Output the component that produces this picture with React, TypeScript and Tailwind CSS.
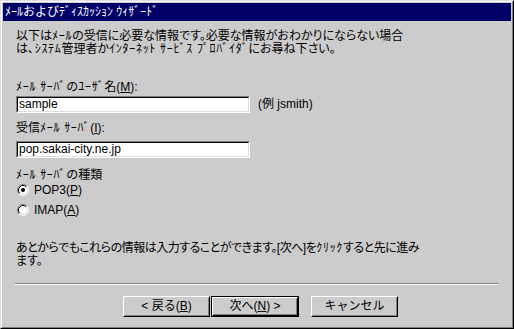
import React from 'react';

const FONT = { fontFamily: '"Liberation Sans", "Noto Sans CJK JP", sans-serif' };

// half-width katakana runs: the reference font sets them a little wider
function H({ children }: { children: React.ReactNode }) {
  return <span className="tracking-[0.7px]">{children}</span>;
}

function Radio({ checked }: { checked?: boolean }) {
  return (
    <svg width="12" height="12" viewBox="0 0 12 12" className="shrink-0">
      <circle cx="6" cy="6" r="5" fill="#ffffff" />
      <path d="M 2.11 9.89 A 5.5 5.5 0 0 1 9.89 2.11" fill="none" stroke="#808080" strokeWidth="1" />
      <path d="M 9.89 2.11 A 5.5 5.5 0 0 1 2.11 9.89" fill="none" stroke="#ffffff" strokeWidth="1" />
      <path d="M 2.82 9.18 A 4.5 4.5 0 0 1 9.18 2.82" fill="none" stroke="#000000" strokeWidth="1" />
      <path d="M 9.18 2.82 A 4.5 4.5 0 0 1 2.82 9.18" fill="none" stroke="#dfdfdf" strokeWidth="1" />
      {checked && <circle cx="6" cy="6" r="2" fill="#000000" />}
    </svg>
  );
}

function TextBox({ value }: { value: string }) {
  return (
    <div className="w-[234px] h-[17px] border border-t-[#808080] border-l-[#808080] border-b-white border-r-white">
      <div className="h-full bg-white border border-t-black border-l-black border-b-[#dfdfdf] border-r-[#dfdfdf] pl-[1px] text-[12px] leading-[13px] text-black">
        {value}
      </div>
    </div>
  );
}

function Button({ children, isDefault }: { children: React.ReactNode; isDefault?: boolean }) {
  const face = (
    <div className="h-full border border-t-white border-l-white border-b-black border-r-black">
      <div className="h-full flex items-center justify-center border border-t-[#cccccc] border-l-[#cccccc] border-b-[#808080] border-r-[#808080] text-[12px] leading-[13px] text-black">
        {children}
      </div>
    </div>
  );
  if (isDefault) {
    return <div className="w-[88px] h-[21px] border border-black">{face}</div>;
  }
  return <div className="w-[87px] h-[21px]">{face}</div>;
}

export default function App() {
  return (
    <div style={FONT} className="w-[514px] h-[329px] bg-[#cccccc] border border-t-[#dfdfdf] border-l-[#dfdfdf] border-b-black border-r-black">
      <div className="h-full p-[1px] border border-t-white border-l-white border-b-[#808080] border-r-[#808080] flex flex-col">
        <div className="h-[18px] bg-[#000066] text-white text-[12px] leading-[18px] px-[2px] shrink-0">
          ﾒｰﾙおよびﾃﾞｨｽｶｯｼｮﾝ ｳｨｻﾞｰﾄﾞ
        </div>

        <div className="pl-[13px] flex flex-col text-[12px] leading-[13px] text-black">
          <div className="mt-[9px] [font-feature-settings:'palt']">
            <div>以下は<H>ﾒｰﾙ</H>の受信に必要な情報です。必要な情報がおわかりにならない場合</div>
            <div>は<H>､ｼｽﾃﾑ</H>管理者か<H>ｲﾝﾀｰﾈｯﾄ ｻｰﾋﾞｽ ﾌﾟﾛﾊﾞｲﾀﾞ</H>にお尋ね下さい。</div>
          </div>

          <div className="mt-[25px]">
            <H>ﾒｰﾙ ｻｰﾊﾞ</H>の<H>ﾕｰｻﾞ</H>名(<u>M</u>):
          </div>
          <div className="mt-[2px] flex items-center">
            <TextBox value="sample" />
            <span className="ml-[8px]">(例 jsmith)</span>
          </div>

          <div className="mt-[9px]">
            受信<H>ﾒｰﾙ ｻｰﾊﾞ</H>(<u>I</u>):
          </div>
          <div className="mt-[6px]">
            <TextBox value="pop.sakai-city.ne.jp" />
          </div>

          <div className="mt-[11px]"><H>ﾒｰﾙ ｻｰﾊﾞ</H>の種類</div>
          <div className="h-[16px] flex items-center ml-[1px]">
            <Radio checked />
            <span className="ml-[5px]">POP3(<u>P</u>)</span>
          </div>
          <div className="mt-[4px] h-[16px] flex items-center ml-[1px]">
            <Radio />
            <span className="ml-[5px]">IMAP(<u>A</u>)</span>
          </div>

          <div className="mt-[24px] [font-feature-settings:'palt']">
            <div className="tracking-[-0.5px]">あとからでもこれらの情報は入力することができます。[次へ]を<H>ｸﾘｯｸ</H>すると先に進み</div>
            <div>ます。</div>
          </div>

          <div className="mt-[15px] -ml-[1px] w-[483px] border-t border-t-[#808080] border-b border-b-white" />

          <div className="mt-[11px] flex pl-[107px]">
            <Button>&lt; 戻る(<u>B</u>)</Button>
            <div className="ml-[1px]">
              <Button isDefault>次へ(<u>N</u>) &gt;</Button>
            </div>
            <div className="ml-[12px]">
              <Button>キャンセル</Button>
            </div>
          </div>
        </div>
      </div>
    </div>
  );
}
